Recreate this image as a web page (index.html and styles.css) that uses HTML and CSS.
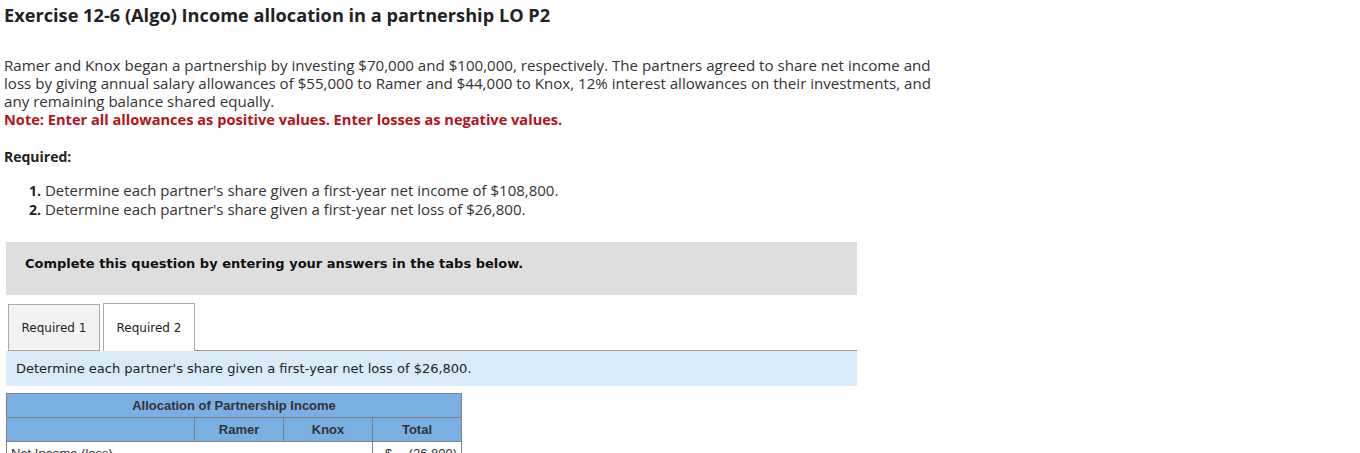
FILE: index.html
```html
<!DOCTYPE html>
<html>
<head>
<meta charset="utf-8">
<link rel="stylesheet" href="styles.css">
</head>
<body>
<div class="page">
  <h1 class="title">Exercise 12-6 (Algo) Income allocation in a partnership LO P2</h1>
  <p class="intro">Ramer and Knox began a partnership by investing $70,000 and $100,000, respectively. The partners agreed to share net income and loss by giving annual salary allowances of $55,000 to Ramer and $44,000 to Knox, 12% interest allowances on their investments, and any remaining balance shared equally.<br><span class="note">Note: Enter all allowances as positive values. Enter losses as negative values.</span></p>
  <p class="req-label">Required:</p>
  <ol class="req-list">
    <li><b>1.</b> Determine each partner's share given a first-year net income of $108,800.</li>
    <li><b>2.</b> Determine each partner's share given a first-year net loss of $26,800.</li>
  </ol>
  <div class="complete-box">Complete this question by entering your answers in the tabs below.</div>
  <div class="tabs">
    <div class="tab">Required 1</div>
    <div class="tab active">Required 2</div>
    <div class="tab-fill"></div>
  </div>
  <div class="tab-info">Determine each partner's share given a first-year net loss of $26,800.</div>
  <table class="alloc">
    <colgroup><col class="w-label"><col class="w-num"><col class="w-num"><col class="w-num"></colgroup>
    <tr class="h1"><th colspan="4">Allocation of Partnership Income</th></tr>
    <tr class="h2"><th></th><th>Ramer</th><th>Knox</th><th>Total</th></tr>
    <tr class="row"><td class="c-label">Net Income (loss)</td><td class="c-empty"></td><td class="c-empty"></td><td class="c-total"><span class="cur">$</span><span class="amt">(26,800)</span></td></tr>
  </table>
</div>
</body>
</html>
```
FILE: styles.css
```css
html, body { margin: 0; padding: 0; background: #fff; }
body { font-family: "Open Sans", "Liberation Sans", sans-serif; color: #333; }
.page { padding: 0 0 0 4px; }
.title { margin: 0; padding-top: 3px; font-size: 18.2px; line-height: 24px; font-weight: bold; color: #222; }
.intro { margin: 29px 0 0 0; width: 940px; font-size: 15.1px; line-height: 18px; color: #333; }
.note { color: #b3131b; font-weight: bold; font-size: 14.6px; }
.req-label { margin: 20px 0 0 0; font-size: 14px; line-height: 18px; font-weight: bold; color: #222; }
.req-list { list-style: none; margin: 15px 0 0 0; padding: 0 0 0 25px; font-size: 15px; line-height: 19px; }
.req-list b { color: #222; font-size: 14px; }
.complete-box { margin: 23px 0 0 2px; width: 851px; height: 53px; box-sizing: border-box; background: #dedede; padding: 14px 0 0 19px; font-family: "DejaVu Sans", Verdana, sans-serif; font-weight: bold; font-size: 13px; line-height: 16px; color: #111; }
.tabs { display: flex; align-items: flex-end; margin: 8px 0 0 4px; width: 849px; }
.tab { width: 92px; height: 47px; box-sizing: border-box; border: 1px solid #aaa; background: #f2f2f2; font-family: "DejaVu Sans", Verdana, sans-serif; font-size: 12px; color: #222; display: flex; align-items: center; justify-content: center; margin-right: 3px; }
.tab.active { background: #fff; border-bottom: none; height: 48px; margin-right: 0; }
.tab-fill { flex: 1; border-bottom: 1px solid #999; }
.tab-info { margin: 0 0 0 2px; width: 851px; height: 35px; box-sizing: border-box; background: #d9ebf9; padding: 10px 0 0 10px; font-family: "DejaVu Sans", Verdana, sans-serif; font-size: 13px; line-height: 16px; color: #222; }
.alloc { margin: 7px 0 0 2px; border-collapse: collapse; table-layout: fixed; width: 455px; font-family: "Liberation Sans", Arial, sans-serif; font-size: 13px; color: #333; }
.w-label { width: 188px; }
.w-num { width: 89px; }
.alloc th { background: #7aafe3; border: 1px solid #808080; height: 23px; padding: 0; font-weight: bold; color: #333; }
.alloc td { height: 23px; padding: 0 4px; border: none; }
.alloc td.c-label { border-left: 1px solid #808080; }
.alloc td.c-total { border-left: 1px solid #808080; border-right: 1px solid #808080; }
.cur { float: left; padding-left: 8px; }
.amt { float: right; }
```
